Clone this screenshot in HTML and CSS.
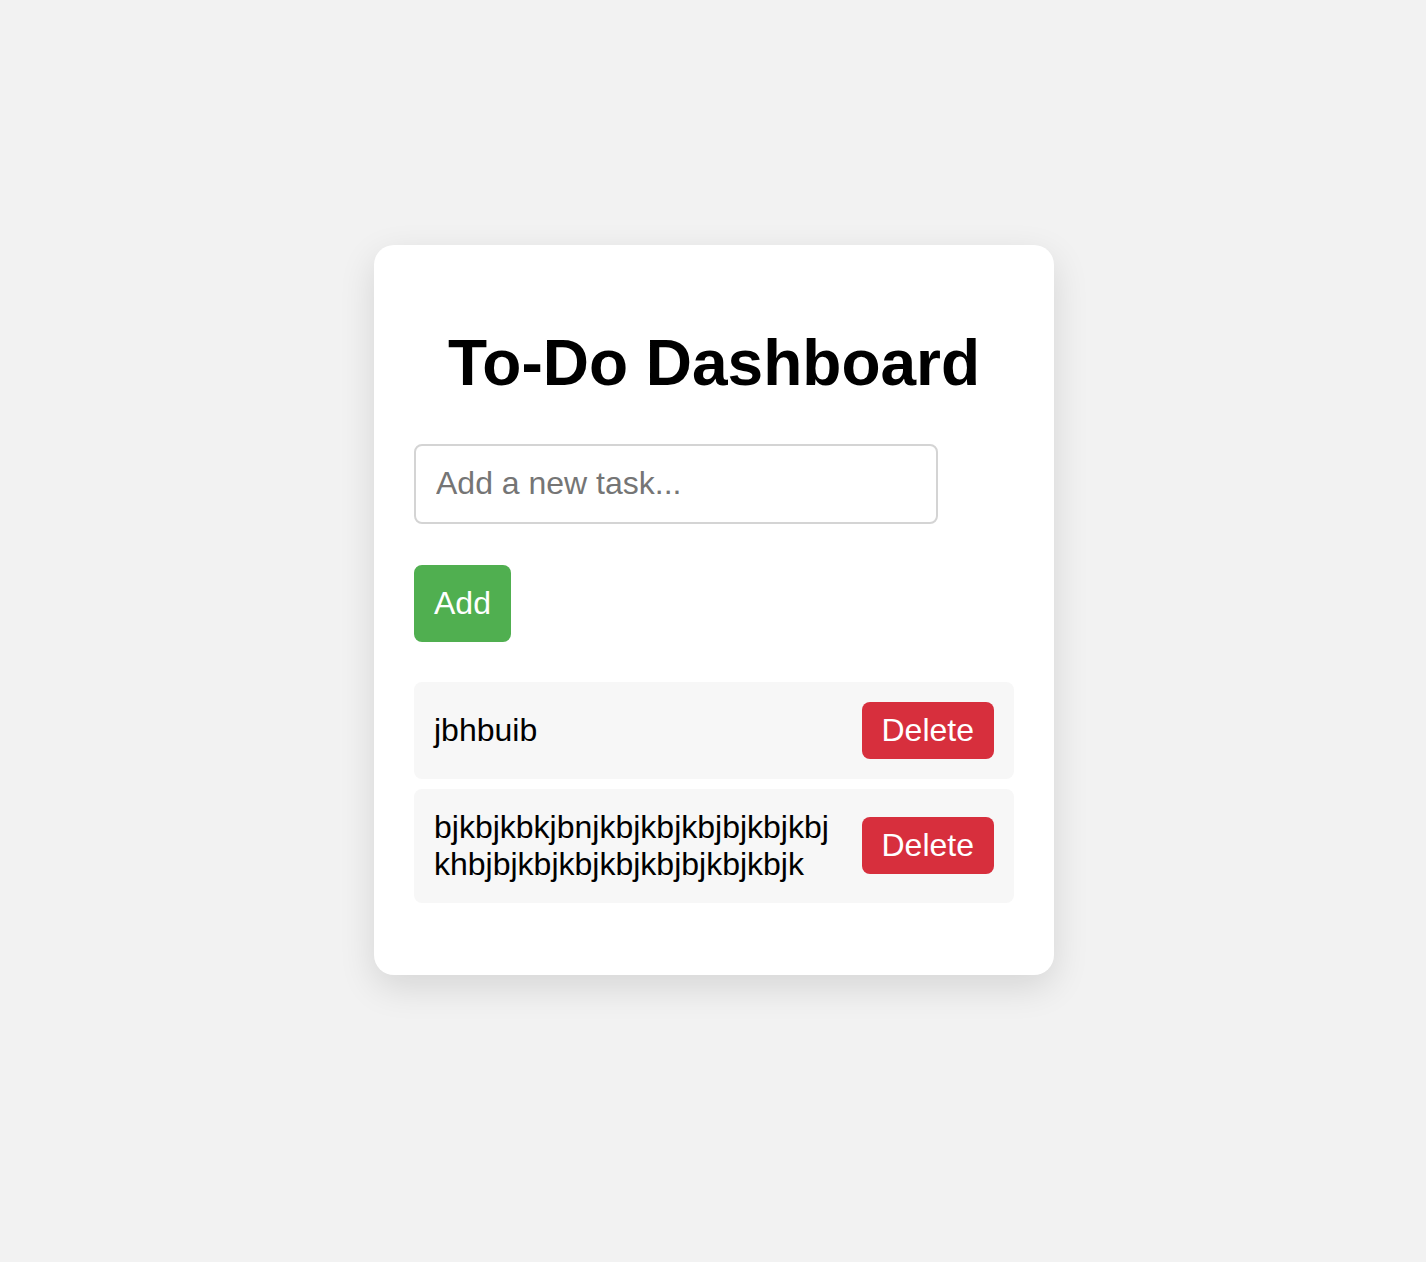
FILE: index.html
```html
<!DOCTYPE html>
<html lang="en">
<head>
<meta charset="utf-8">
<title>To-Do Dashboard</title>
<link rel="stylesheet" href="styles.css">
</head>
<body>
  <main class="card">
    <h1 class="title">To-Do Dashboard</h1>
    <input class="task-input" type="text" placeholder="Add a new task...">
    <div class="actions">
      <button class="btn btn-add">Add</button>
    </div>
    <ul class="task-list">
      <li class="task">
        <span class="task-text">jbhbuib</span>
        <button class="btn btn-delete">Delete</button>
      </li>
      <li class="task">
        <span class="task-text">bjkbjkbkjbnjkbjkbjkbjbjkbjkbjkhbjbjkbjkbjkbjkbjbjkbjkbjk</span>
        <button class="btn btn-delete">Delete</button>
      </li>
    </ul>
  </main>
</body>
</html>
```

FILE: styles.css
```css
* {
  box-sizing: border-box;
}

html, body {
  margin: 0;
  padding: 0;
}

body {
  background: #f2f2f2;
  font-family: "Liberation Sans", Arial, Helvetica, sans-serif;
  font-size: 32px;
  color: #000;
  min-height: 100vh;
  padding-left: 2px;
}

.card {
  width: 680px;
  margin: 245px auto 0;
  background: #fff;
  border-radius: 20px;
  padding: 40px;
  box-shadow: 0 12px 36px rgba(0, 0, 0, 0.12);
}

.title {
  font-size: 64px;
  font-weight: bold;
  text-align: center;
  margin: 42px 0 43px;
  line-height: 73.6px;
}

.task-input {
  display: block;
  width: 524px;
  height: 80px;
  padding: 0 20px;
  font-family: inherit;
  font-size: 32px;
  color: #000;
  border: 2px solid #d4d4d4;
  border-radius: 8px;
  background: #fff;
  outline: none;
}

.task-input::placeholder {
  color: #757575;
}

.actions {
  margin-top: 41px;
  display: flex;
}

.btn {
  font-family: inherit;
  font-size: 32px;
  line-height: 37px;
  color: #fff;
  border: none;
  border-radius: 8px;
  cursor: pointer;
}

.btn-add {
  background: #50af50;
  padding: 20px;
}

.btn-delete {
  background: #d72f3d;
  padding: 10px 20px;
  flex-shrink: 0;
}

.task-list {
  list-style: none;
  margin: 40px 0 32px;
  padding: 0;
  display: flex;
  flex-direction: column;
  gap: 10px;
}

.task {
  display: flex;
  align-items: center;
  justify-content: space-between;
  background: #f7f7f7;
  border-radius: 8px;
  padding: 20px;
}

.task-text {
  flex: 1;
  min-width: 0;
  line-height: 37px;
  margin-right: 20px;
  word-break: break-all;
}
```
